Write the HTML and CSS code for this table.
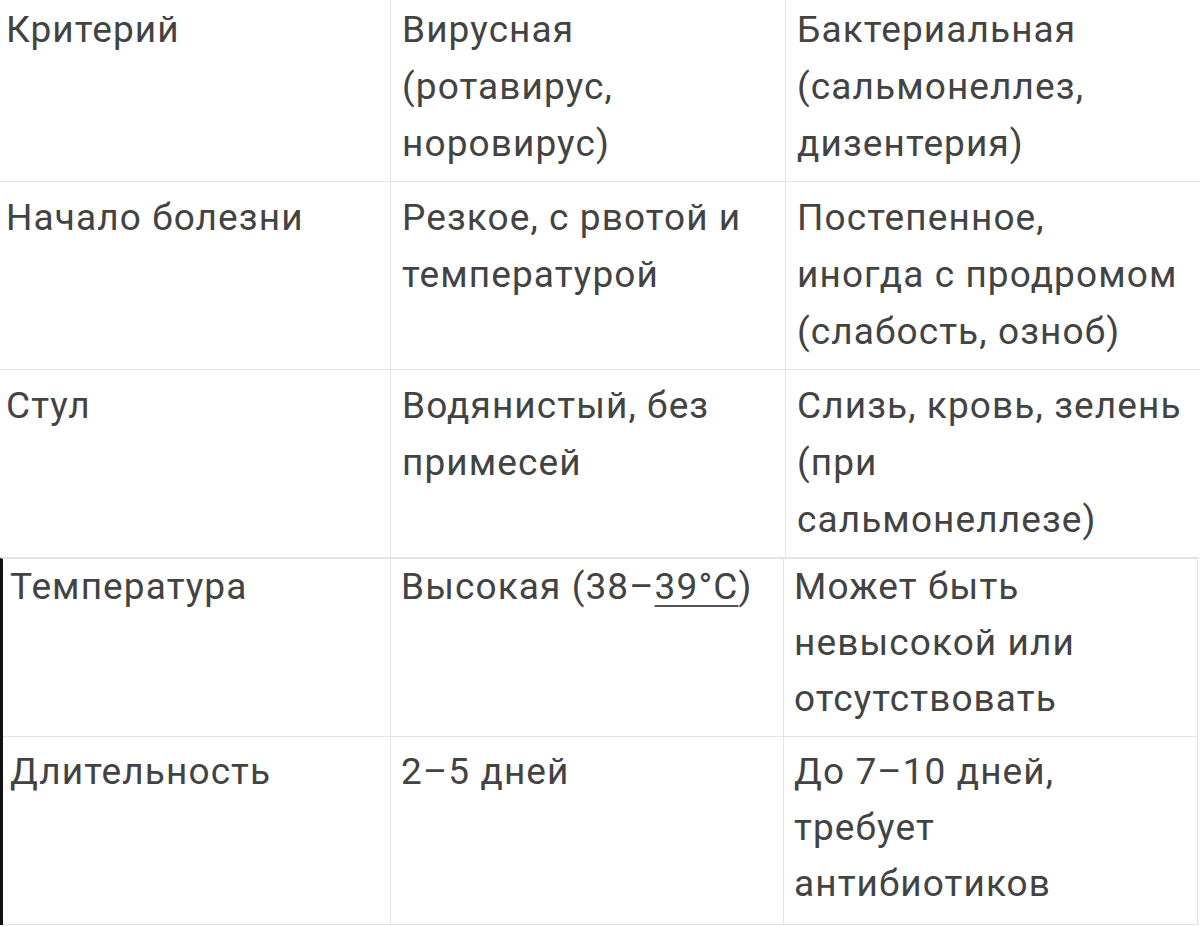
FILE: index.html
```html
<!DOCTYPE html>
<html lang="ru">
<head>
<meta charset="utf-8">
<title>Сравнение кишечных инфекций</title>
<link rel="stylesheet" href="styles.css">
</head>
<body>
<div class="sheet top">
  <div class="row first">
    <div class="cell c1">Критерий</div>
    <div class="cell c2">Вирусная<br>(ротавирус,<br>норовирус)</div>
    <div class="cell c3">Бактериальная<br>(сальмонеллез,<br>дизентерия)</div>
  </div>
  <div class="row">
    <div class="cell c1">Начало болезни</div>
    <div class="cell c2">Резкое, с рвотой и<br>температурой</div>
    <div class="cell c3">Постепенное,<br>иногда с продромом<br>(слабость, озноб)</div>
  </div>
  <div class="row">
    <div class="cell c1">Стул</div>
    <div class="cell c2">Водянистый, без<br>примесей</div>
    <div class="cell c3">Слизь, кровь, зелень<br>(при<br>сальмонеллезе)</div>
  </div>
</div>
<div class="sheet bottom">
  <div class="row">
    <div class="cell c1">Температура</div>
    <div class="cell c2">Высокая (38–<span class="link">39°C</span>)</div>
    <div class="cell c3">Может быть<br>невысокой или<br>отсутствовать</div>
  </div>
  <div class="row last">
    <div class="cell c1">Длительность</div>
    <div class="cell c2">2–5 дней</div>
    <div class="cell c3">До 7–10 дней,<br>требует<br>антибиотиков</div>
  </div>
</div>
</body>
</html>
```

FILE: styles.css
```css
html, body {
  margin: 0;
  padding: 0;
  background: #ffffff;
}

body {
  width: 1200px;
  height: 927px;
  overflow: hidden;
  font-family: "Roboto", "Liberation Sans", sans-serif;
  color: #434343;
}

.sheet {
  display: flex;
  flex-direction: column;
}

.row {
  display: grid;
  grid-template-columns: 391px 395px 414px;
  border-bottom: 1px solid #e4e4e4;
}

.cell {
  white-space: nowrap;
  font-size: 37px;
  letter-spacing: 1.1px;
  line-height: 57px;
  padding: 7px 10px 9px 11px;
}

.top .row.first .cell {
  padding-top: 1px;
  padding-bottom: 9px;
}

.top .cell.c1 {
  padding-left: 6px;
}

.c1, .c2 {
  border-right: 1px solid #e4e4e4;
}

.bottom {
  border-left: 3px solid #111111;
  border-top: 1px solid #e4e4e4;
  width: 1194px;
  border-right: 1px solid #e4e4e4;
}

.bottom .row {
  grid-template-columns: 388px 393px 412px;
}

.bottom .cell {
  line-height: 56px;
  padding: 0 8px 9px 10px;
}

.bottom .cell.c1 {
  padding-left: 7px;
}

.bottom .row.last .cell {
  padding-top: 7px;
  padding-bottom: 12px;
}

.link {
  text-decoration: underline;
  text-decoration-thickness: 2px;
  text-underline-offset: 6px;
  text-decoration-color: #555555;
}
```
